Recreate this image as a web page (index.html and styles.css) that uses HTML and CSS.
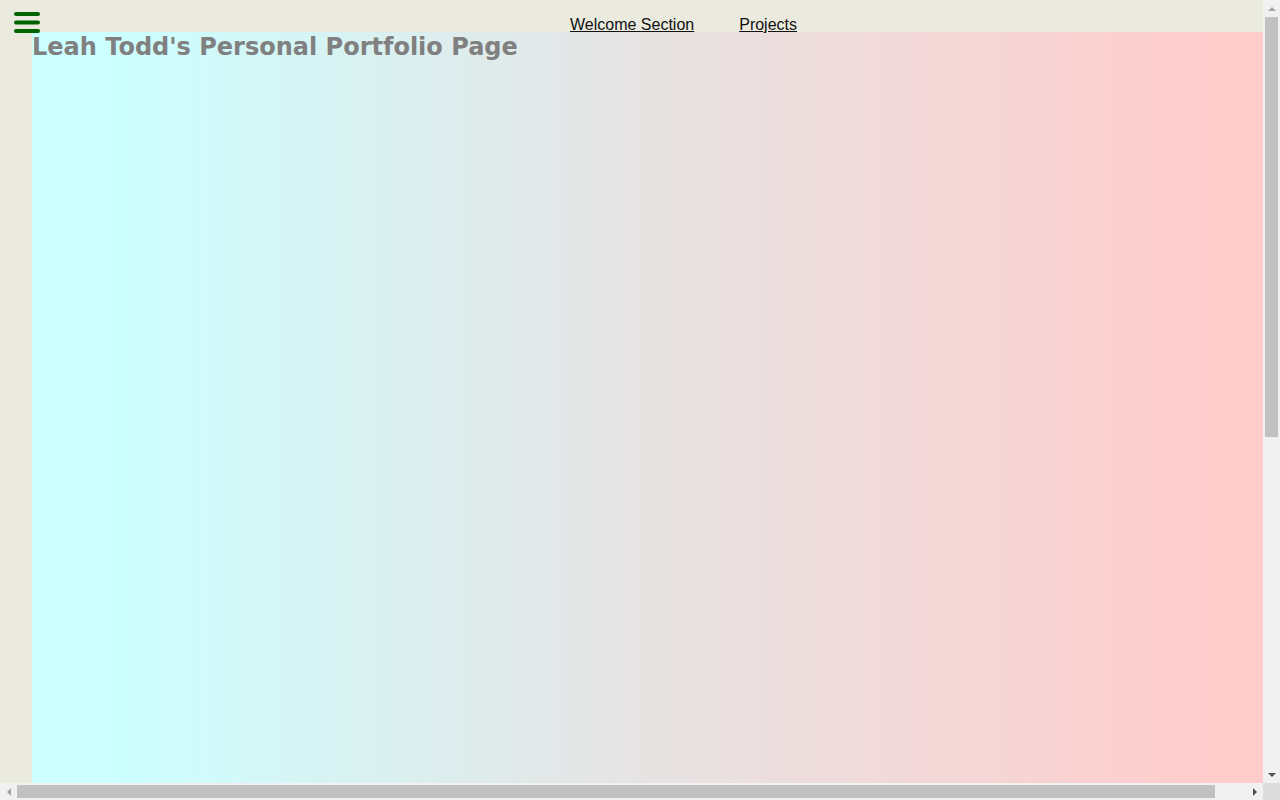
FILE: index.html
```html
<!DOCTYPE html>
<html lang="en">
<head>
<meta charset="utf-8">
<title>Leah Todd's Personal Portfolio Page</title>
<link rel="stylesheet" href="styles.css">
</head>
<body>
<div class="window">
  <div class="viewport">
    <div class="page">
      <header class="topbar">
        <button class="menu" aria-label="Menu">
          <svg width="26" height="21" viewBox="0 0 26 21"><g stroke="#006400" stroke-width="4" stroke-linecap="round"><line x1="2" y1="2" x2="24" y2="2"/><line x1="2" y1="10.5" x2="24" y2="10.5"/><line x1="2" y1="19" x2="24" y2="19"/></g></svg>
        </button>
        <nav class="nav">
          <a href="#welcome">Welcome Section</a>
          <a href="#projects">Projects</a>
        </nav>
      </header>
      <main class="welcome" id="welcome">
        <h1 class="title">Leah Todd's Personal Portfolio Page</h1>
      </main>
    </div>
  </div>
  <div class="vscroll">
    <div class="arrow arrow-up off"></div>
    <div class="vtrack"><div class="vthumb"></div></div>
    <div class="arrow arrow-down"></div>
  </div>
  <div class="hscroll">
    <div class="arrow arrow-left off"></div>
    <div class="htrack"><div class="hthumb"></div></div>
    <div class="arrow arrow-right"></div>
  </div>
  <div class="corner"></div>
</div>
</body>
</html>
```
FILE: styles.css
```css
html, body {
  margin: 0;
  padding: 0;
  overflow: hidden;
}
body {
  font-family: "Liberation Sans", Arial, sans-serif;
}
.window {
  display: grid;
  grid-template-columns: 1263px 17px;
  grid-template-rows: 783px 17px;
  width: 1280px;
  height: 800px;
}
.viewport {
  overflow: hidden;
  background: #ebeadf;
}
.page {
  width: 1297px;
}
.topbar {
  height: 32px;
  display: flex;
  align-items: flex-start;
}
.menu {
  margin: 12px 0 0 14px;
  padding: 0;
  border: 0;
  background: none;
  width: 26px;
  height: 21px;
  display: block;
}
.menu svg { display: block; }
.nav {
  display: flex;
  gap: 45px;
  margin-left: 530px;
  padding-top: 16px;
  font-size: 16px;
  line-height: 18px;
}
.nav a {
  color: #111;
  text-decoration: underline;
}
.welcome {
  margin-left: 32px;
  height: 1364px;
  background: linear-gradient(to right, #ccffff 6%, #e5e5e5 45%, #ffcccc 93%);
}
.title {
  margin: 0;
  font-family: "DejaVu Sans", Verdana, sans-serif;
  font-weight: bold;
  font-size: 24px;
  line-height: 30px;
  color: #808080;
}

/* scrollbars */
.vscroll {
  background: #f1f1f1;
  display: flex;
  flex-direction: column;
}
.hscroll {
  background: #f1f1f1;
  display: flex;
}
.corner {
  background: #dcdcdc;
}
.arrow {
  flex: 0 0 17px;
  width: 17px;
  height: 17px;
  display: flex;
  align-items: center;
  justify-content: center;
}
.arrow::before {
  content: "";
  width: 0;
  height: 0;
  border-style: solid;
}
.arrow-up::before {
  border-width: 0 4px 4px 4px;
  border-color: transparent transparent #505050 transparent;
}
.arrow-down::before {
  border-width: 4px 4px 0 4px;
  border-color: #505050 transparent transparent transparent;
}
.arrow-left::before {
  border-width: 4px 4px 4px 0;
  border-color: transparent #505050 transparent transparent;
}
.arrow-right::before {
  border-width: 4px 0 4px 4px;
  border-color: transparent transparent transparent #505050;
}
.arrow-up.off::before { border-bottom-color: #a3a3a3; }
.arrow-left.off::before { border-right-color: #a3a3a3; }
.vtrack {
  flex: 1;
  display: flex;
  flex-direction: column;
}
.vthumb {
  height: 420px;
  margin: 0 2px;
  background: #c1c1c1;
}
.htrack {
  flex: 1;
  display: flex;
  align-items: center;
}
.hthumb {
  width: 1198px;
  height: 13px;
  background: #c1c1c1;
}
```
